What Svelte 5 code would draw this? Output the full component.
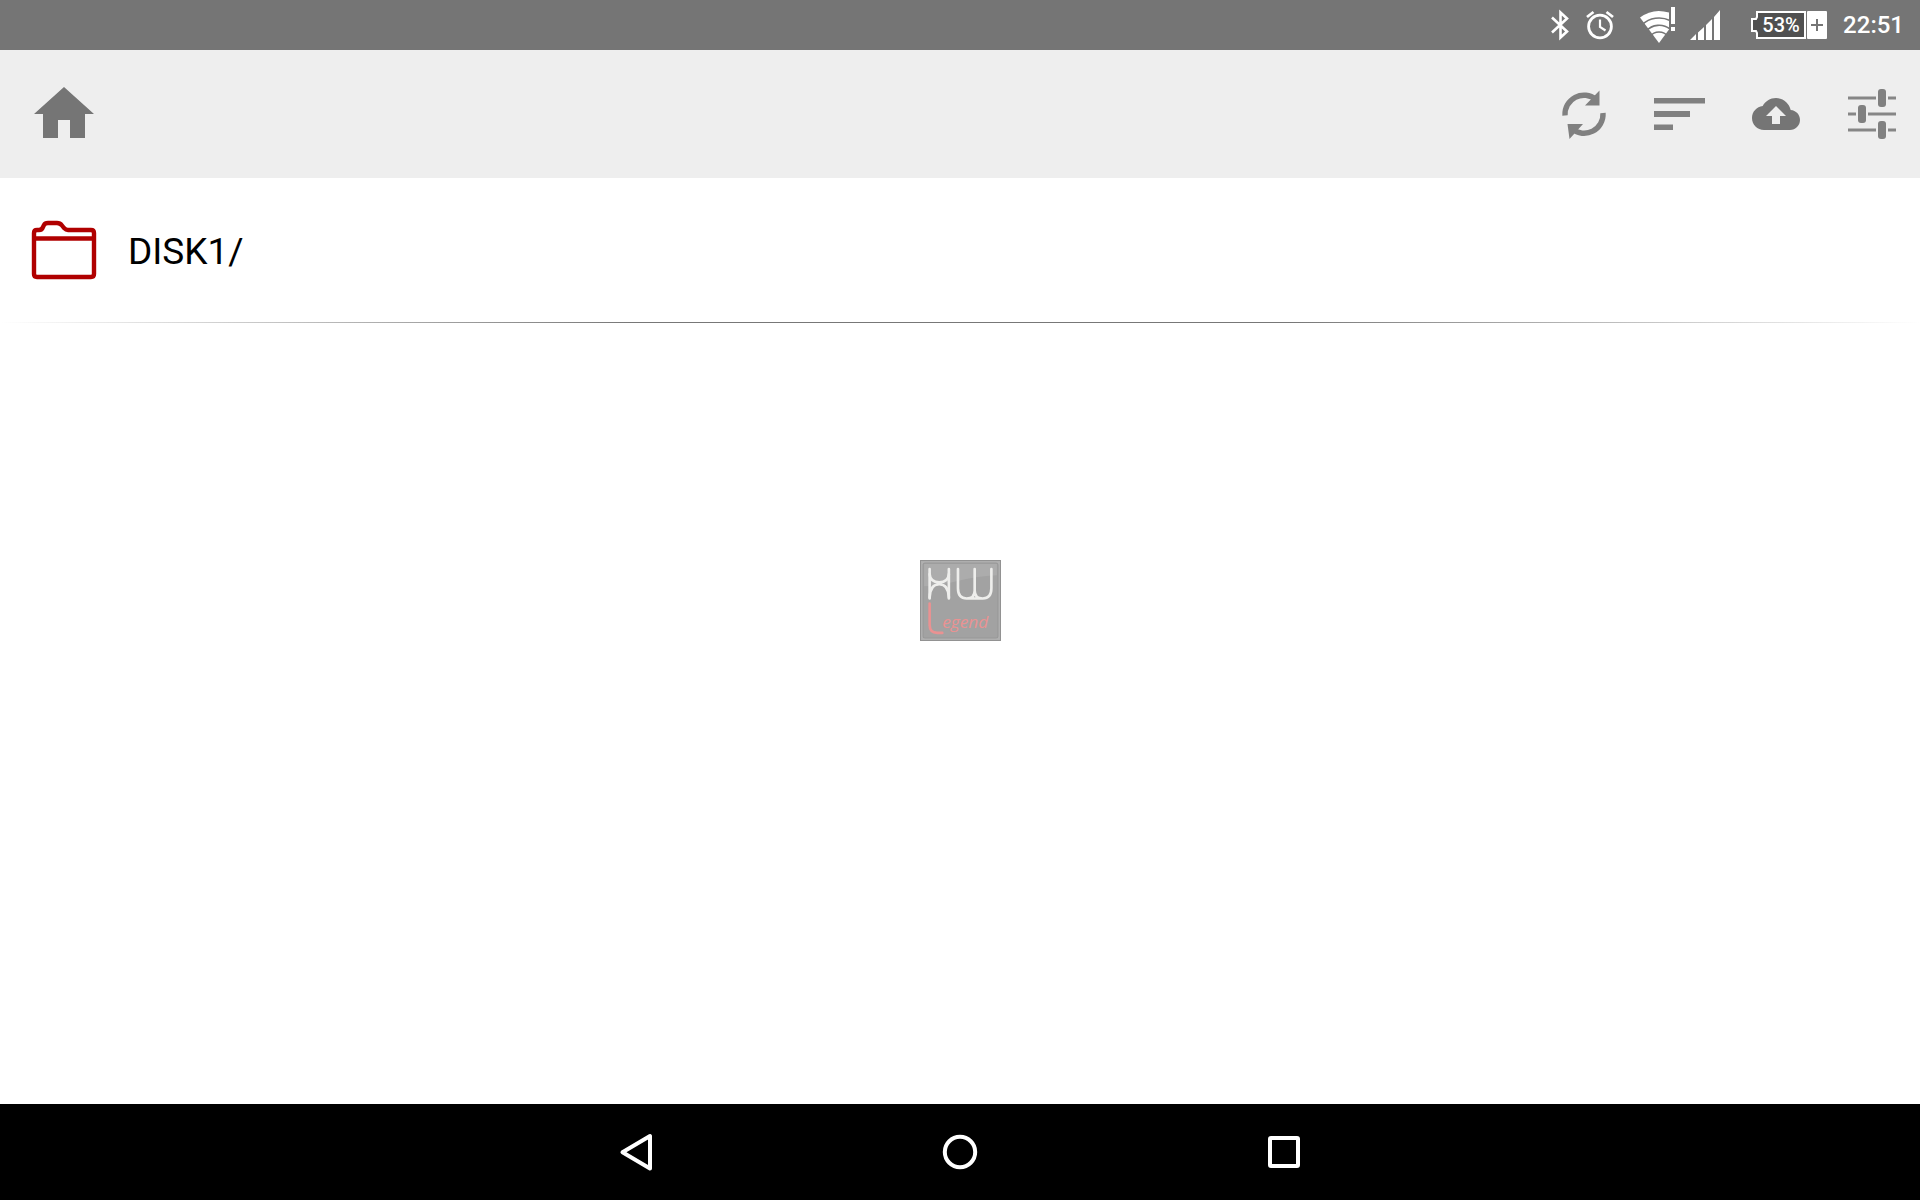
<script>
  const entries = [{ name: 'DISK1/' }];
  const battery = 53;
  const time = '22:51';
</script>

<div class="screen">
  <div class="status">
    <div class="group">
      <svg width="20" height="28" viewBox="0 0 20 28" role="img" aria-label="Bluetooth">
        <path d="M2 6.500 17 20.500 10.500 26.500V1.500L17 7.500 2 21.500" fill="none" stroke="#fff" stroke-width="2.600" />
      </svg>
      <svg width="28" height="28" viewBox="0 0 28 28" role="img" aria-label="Alarm">
        <g fill="none" stroke="#fff" stroke-width="2.800">
          <circle cx="14" cy="15.500" r="11.400" />
          <path d="M1 6 7.500 1M27 6 20.500 1" />
          <path d="M14 8.500V16L19.500 19.500" stroke-width="2.200" />
        </g>
      </svg>
    </div>

    <div class="group">
      <svg width="34" height="36" viewBox="0 0 34 36" role="img" aria-label="Wi-Fi, no internet">
        <path d="M0 10.500A32 32 0 0 1 29 5.600V22.600L19 36Z" fill="#fff" />
        <g fill="none" stroke="#757575" stroke-width="1.600">
          <path d="M2 17.700A25 25 0 0 1 30 13.500" />
          <path d="M6 24.100A17.700 17.700 0 0 1 30 22" />
          <path d="M10 29.500A11.200 11.200 0 0 1 28 29.500" />
        </g>
        <path d="M31 0h4v17h-4zM31 20h4v4h-4z" fill="#fff" />
      </svg>
      <svg width="35" height="30" viewBox="0 0 35 30" role="img" aria-label="Signal strength">
        <path d="M0 30 6 24V30ZM8 22.500 14 17V30H8ZM16 15 22 9V30H16ZM24 7 30 0V30H24Z" fill="#fff" />
      </svg>
    </div>

    <div class="group">
      <svg width="76" height="28" viewBox="0 0 76 28" role="img" aria-label="Battery {battery}%, charging">
        <path d="M6 1H54V27H6V22L5 20H1V8H5L6 6Z" fill="#505050" stroke="#fff" stroke-width="2" />
        <text class="level" x="30" y="21">{battery}%</text>
        <rect x="56" width="20" height="28" rx="1" fill="#fff" />
        <path d="M60 14H72M66 8V20" stroke="#757575" stroke-width="2" />
      </svg>
      <time>{time}</time>
    </div>
  </div>

  <header>
    <button class="home" aria-label="Home">
      <svg width="72" height="72" viewBox="0 0 24 24"><path d="M10 20v-6h4v6h5v-8h3L12 3 2 12h3v8z" /></svg>
    </button>
    <div class="actions">
      <button aria-label="Refresh">
        <svg width="48" height="52" viewBox="0 0 48 52">
          <g fill="none" stroke="#808080" stroke-width="5.400">
            <path d="M5 27.500A19 19 0 0 1 36 11.500" />
            <path d="M43 25A19 19 0 0 1 12 41" />
          </g>
          <path d="M39.500 2.500V17.500H25ZM7.500 36H23L9.500 51Z" fill="#808080" />
        </svg>
      </button>
      <button aria-label="Sort">
        <svg width="52" height="32" viewBox="0 0 52 32">
          <path d="M0 0H51V5.500H0ZM0 13H36V19H0ZM0 26.500H19V32H0Z" fill="#808080" />
        </svg>
      </button>
      <button aria-label="Upload">
        <svg width="48" height="48" viewBox="0 0 24 24">
          <path d="M19.350 10.040C18.670 6.590 15.640 4 12 4 9.110 4 6.600 5.640 5.350 8.040 2.340 8.360 0 10.910 0 14c0 3.310 2.690 6 6 6h13c2.760 0 5-2.240 5-5 0-2.640-2.050-4.780-4.650-4.960zM14 13v4h-4v-4H7l5-5 5 5h-3z" />
        </svg>
      </button>
      <button aria-label="Settings">
        <svg width="48" height="50" viewBox="0 0 48 50">
          <path d="M0 9H28M40 9H48M0 25H8M20 25H48M0 41H28M40 41H48" stroke="#868686" stroke-width="3" />
          <g fill="#808080">
            <rect x="30" y="0" width="8" height="18" rx="3" />
            <rect x="10" y="16" width="8" height="18" rx="3" />
            <rect x="30" y="32" width="8" height="18" rx="3" />
          </g>
        </svg>
      </button>
    </div>
  </header>

  <main>
    <ul>
      {#each entries as entry}
        <li>
          <button class="entry">
            <svg width="64" height="60" viewBox="0 0 64 60" aria-hidden="true">
              <g fill="none" stroke="#b00000" stroke-width="4.400" stroke-linejoin="round">
                <path d="M2 54V13Q2 10 5 10H7Q10 10 11 7L12 5Q13 3 16 3H25Q28 3 30 5.500L32 8Q34 10 36 10H59Q62 10 62 13V54Q62 57 59 57H5Q2 57 2 54Z" />
                <path d="M2 18.500H62" />
              </g>
            </svg>
            <span>{entry.name}</span>
          </button>
        </li>
      {/each}
    </ul>
  </main>

  <nav>
    <button aria-label="Back">
      <svg width="32" height="38" viewBox="0 0 32 38"><path d="M30 3V35.500L2.500 19.200Z" /></svg>
    </button>
    <button aria-label="Home screen">
      <svg width="36" height="36" viewBox="0 0 36 36"><circle cx="18" cy="18" r="15.200" /></svg>
    </button>
    <button aria-label="Recent apps">
      <svg width="32" height="32" viewBox="0 0 32 32"><rect x="2" y="2" width="28" height="28" rx="1" /></svg>
    </button>
  </nav>

  <div class="watermark">
    <svg width="82" height="82" viewBox="-1 -1 81 81" role="img" aria-label="HW Legend">
      <rect width="80" height="80" fill="#b0b0b0" />
      <rect x="0.500" y="0.500" width="79" height="79" fill="none" stroke="#929292" />
      <rect x="3" y="3" width="74" height="74" rx="2" fill="#a2a2a2" stroke="#989898" />
      <path d="M4 4H76V15Q55 16 36 21T4 26Z" fill="#acacac" />
      <g fill="none" stroke="#eeeeec" stroke-width="2.600" stroke-linecap="round" stroke-linejoin="round">
        <path d="M9.500 9V38M28.500 9V38" />
        <path d="M9.500 14Q10 22 19 22T28.500 14M9.500 37Q10 24 19 24T28.500 37" />
        <path d="M37.500 9V28Q37.500 38 46 38H62Q70.500 38 70.500 28V9M54 9V30Q54 38 46 38M54 30Q54 38 62 38" />
      </g>
      <path d="M9.500 43V64Q9.500 72 17 72H22" fill="none" stroke="#ea9292" stroke-width="2.600" stroke-linecap="round" />
      <text class="brand" x="22" y="67">egend</text>
    </svg>
  </div>
</div>

<style>
  :global(body) {
    margin: 0;
  }

  .screen {
    display: flex;
    flex-direction: column;
    min-height: 100vh;
    background: #fff;
    color: #000;
    font-family: Roboto, sans-serif;
  }

  svg {
    display: block;
    flex: none;
    overflow: visible;
  }

  button {
    display: flex;
    align-items: center;
    justify-content: center;
    padding: 0;
    border: 0;
    background: none;
    color: inherit;
    font: inherit;
    cursor: pointer;
  }

  .status {
    display: flex;
    align-items: center;
    justify-content: flex-end;
    gap: 26px;
    height: 50px;
    padding-right: 16px;
    background: #757575;
    color: #fff;
    font-weight: 500;
  }

  .group {
    display: flex;
    align-items: center;
    gap: 16px;
  }

  .level {
    fill: #fff;
    font-size: 20px;
    text-anchor: middle;
  }

  time {
    font-size: 24px;
    line-height: 28px;
  }

  header {
    display: flex;
    align-items: center;
    justify-content: space-between;
    height: 128px;
    background: #eee;
  }

  header button {
    width: 96px;
    height: 96px;
    fill: #757575;
  }

  header .home {
    width: 128px;
  }

  .actions {
    display: flex;
  }

  main {
    flex: 1;
  }

  ul {
    margin: 0;
    padding: 0;
    list-style: none;
  }

  li::after {
    content: '';
    display: block;
    height: 1px;
    background: linear-gradient(to right, transparent, #777 33%, #777 67%, transparent);
  }

  .entry {
    justify-content: flex-start;
    gap: 32px;
    width: 100%;
    height: 144px;
    padding: 0 32px;
    font-size: 37px;
    line-height: 44px;
  }

  .entry span {
    padding-top: 4px;
  }

  nav {
    display: flex;
    justify-content: center;
    height: 96px;
    background: #000;
  }

  nav button {
    width: 324px;
    fill: none;
    stroke: #fff;
    stroke-width: 4;
    stroke-linejoin: round;
  }

  .watermark {
    position: fixed;
    inset: 0;
    display: grid;
    place-items: center;
    pointer-events: none;
  }

  .brand {
    fill: #ea9292;
    font-family: 'Open Sans', sans-serif;
    font-size: 17px;
    font-style: italic;
  }
</style>
